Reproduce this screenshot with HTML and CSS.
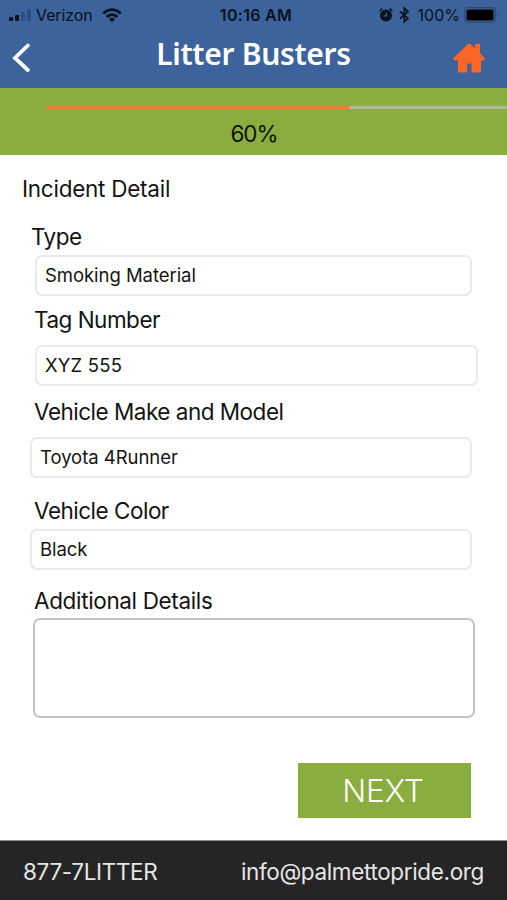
FILE: index.html
```html
<!DOCTYPE html>
<html lang="en">
<head>
<meta charset="utf-8">
<title>Litter Busters</title>
<link rel="stylesheet" href="styles.css">
</head>
<body>
<div class="screen">
  <header class="header">
    <div class="status">
      <div class="status-left">
        <svg class="signal" width="24" height="14" viewBox="0 0 24 14"><rect x="1" y="9" width="4" height="4" rx="1"/><rect x="7" y="7" width="4" height="6" rx="1"/><g fill="#294f80"><rect x="13" y="4" width="4" height="9" rx="1"/><rect x="19" y="1" width="4" height="12" rx="1"/></g></svg>
        <span class="carrier">Verizon</span>
        <svg class="wifi" width="20" height="15" viewBox="0 0 20 15"><g fill="none" stroke="#081120" stroke-width="2.700"><path d="M1.200 5.400Q10-2.200 18.800 5.400"/><path d="M4.500 8.900Q10 4.200 15.500 8.900"/></g><path d="M6.800 11Q10 8.600 13.200 11L10 14.200Z" fill="#081120"/></svg>
      </div>
      <span class="clock">10:16 AM</span>
      <div class="status-right">
        <svg class="alarm" width="14" height="14" viewBox="0 0 14 14"><circle cx="7" cy="7.500" r="6"/><path d="M1 3.500Q1 1.200 3.500 1M13 3.500Q13 1.200 10.500 1" fill="none" stroke="#081120" stroke-width="1.300"/><path d="M7.500 4.500V7.800H4.800" fill="none" stroke="#3d639d" stroke-width="1.200"/></svg>
        <svg class="bluetooth" width="11" height="16" viewBox="0 0 11 16"><path d="M1 4.300L9 11.500L5.300 14.800V1.200L9 4.500L1 11.700" fill="none" stroke="#081120" stroke-width="1.700"/></svg>
        <span class="percent">100%</span>
        <svg class="battery" width="36" height="16" viewBox="0 0 36 16"><rect x=".7" y=".7" width="30.600" height="14.600" rx="3" fill="none" stroke="#294a75" stroke-width="1.200"/><rect x="2.500" y="2.500" width="27" height="11" rx="1.500" fill="#000"/><path d="M33 5.500Q35.500 8 33 10.500Z" fill="#294a75"/></svg>
      </div>
    </div>
    <div class="nav">
      <svg class="back" width="20" height="30" viewBox="0 0 20 30"><path d="M15.800 2.500L3 15L15.800 27" fill="none" stroke="#fff" stroke-width="3.800" stroke-linecap="round"/></svg>
      <h1 class="title">Litter Busters</h1>
      <svg class="home" width="32" height="30" viewBox="0 0 32 30"><path d="M16 0L22 5.200V1H27V10L32 15.500L31 17.500H28V29.500H18.500V20.500H14.200V29.500H5V17.500H1.200L0 15.500Z" fill="#fb6525"/></svg>
    </div>
  </header>
  <section class="progress">
    <div class="track"><div class="fill"></div></div>
    <div class="progress-label">60%</div>
  </section>
  <main class="form">
    <h2 class="heading">Incident Detail</h2>
    <label class="label type-label">Type</label>
    <div class="field inset">Smoking Material</div>
    <label class="label tag-label">Tag Number</label>
    <div class="field inset wide plate">XYZ 555</div>
    <label class="label make-label">Vehicle Make and Model</label>
    <div class="field">Toyota 4Runner</div>
    <label class="label color-label">Vehicle Color</label>
    <div class="field">Black</div>
    <label class="label details-label">Additional Details</label>
    <div class="details"></div>
    <div class="next"><span>NEXT</span></div>
  </main>
  <footer class="footer">
    <span class="phone">877-7LITTER</span>
    <span class="email">info@palmettopride.org</span>
  </footer>
</div>
</body>
</html>
```

FILE: styles.css
```css
* { box-sizing: border-box; }
body {
  margin: 0;
  background: #fff;
  color: #141414;
  font-family: Inter, "Liberation Sans", sans-serif;
}
.screen {
  display: flex;
  flex-direction: column;
  width: 507px;
  height: 900px;
  overflow: hidden;
}
.header { height: 88px; flex: none; background: #3d639d; }
.status {
  display: grid;
  grid-template-columns: 1fr auto 1fr;
  align-items: center;
  height: 30px;
  padding: 0 7px 0 8px;
  color: #081120;
  fill: #081120;
  font-size: 16px;
}
.status-left, .status-right { display: flex; align-items: center; }
.status-right { justify-content: flex-end; }
.carrier { margin-left: 4px; letter-spacing: -0.1px; }
.wifi { margin-left: 9px; }
.clock { margin-left: 4px; font-weight: 600; letter-spacing: 0.3px; }
.bluetooth { margin-left: 6px; }
.percent { margin-left: 8px; }
.battery { margin-left: 4px; }
.nav {
  display: grid;
  grid-template-columns: 60px 1fr 60px;
  align-items: center;
  height: 56px;
  padding: 0 22px 0 12px;
}
.home { justify-self: end; }
.title {
  margin: 0;
  padding: 0 0 8px 10px;
  color: #fff;
  font: 600 30px/48px "Noto Sans", sans-serif;
  letter-spacing: -0.3px;
  text-align: center;
  white-space: nowrap;
}
.progress {
  height: 67px;
  flex: none;
  padding-top: 18px;
  background: #89ad3e;
}
.track { height: 3px; margin-left: 46px; background: #b0b7a3; }
.fill { width: 303px; height: 3px; background: #df8432; }
.progress-label {
  margin-top: 10px;
  padding-left: 1px;
  color: #0b1504;
  font-size: 22.500px;
  letter-spacing: -1px;
  line-height: 30px;
  text-align: center;
}
.form { display: flex; flex-direction: column; flex: 1; padding: 19px 0 0 30px; }
.heading {
  margin: 0 0 0 -8px;
  font-size: 22.500px;
  font-weight: 400;
  letter-spacing: -0.25px;
  line-height: 30px;
}
.label { margin-left: 4px; font-size: 22.500px; letter-spacing: -0.5px; line-height: 30px; }
.type-label { margin: 18px 0 3px 1px; }
.tag-label { margin: 9px 0 10px 4px; }
.make-label { margin-top: 11px; margin-bottom: 10px; }
.color-label { margin-top: 18px; margin-bottom: 3px; }
.details-label { margin-top: 16px; margin-bottom: 2px; letter-spacing: -0.35px; }
.field {
  width: 442px;
  height: 41px;
  padding-left: 8px;
  border: 2px solid #e9e9e9;
  border-radius: 7px;
  font-size: 18.500px;
  letter-spacing: -0.05px;
  line-height: 36px;
}
.inset { width: 437px; margin-left: 5px; }
.wide { width: 443px; }
.plate { letter-spacing: 0.2px; }
.details {
  width: 442px;
  height: 100px;
  margin-left: 3px;
  border: 2px solid #c4c4c4;
  border-radius: 7px;
}
.next {
  width: 173px;
  height: 55px;
  margin: 45px 0 0 268px;
  padding-right: 3px;
  background: #89ad3e;
  color: #fff;
  font-size: 31.500px;
  font-weight: 350;
  letter-spacing: -0.2px;
  line-height: 56px;
  text-align: center;
}
.footer {
  display: flex;
  justify-content: space-between;
  align-items: center;
  height: 60px;
  flex: none;
  padding: 1px 23px 0 23px;
  border-top: 1px solid #8e8e8e;
  background: #252525;
  color: #e6e6e6;
  font-size: 22.500px;
  letter-spacing: -0.35px;
}
```
